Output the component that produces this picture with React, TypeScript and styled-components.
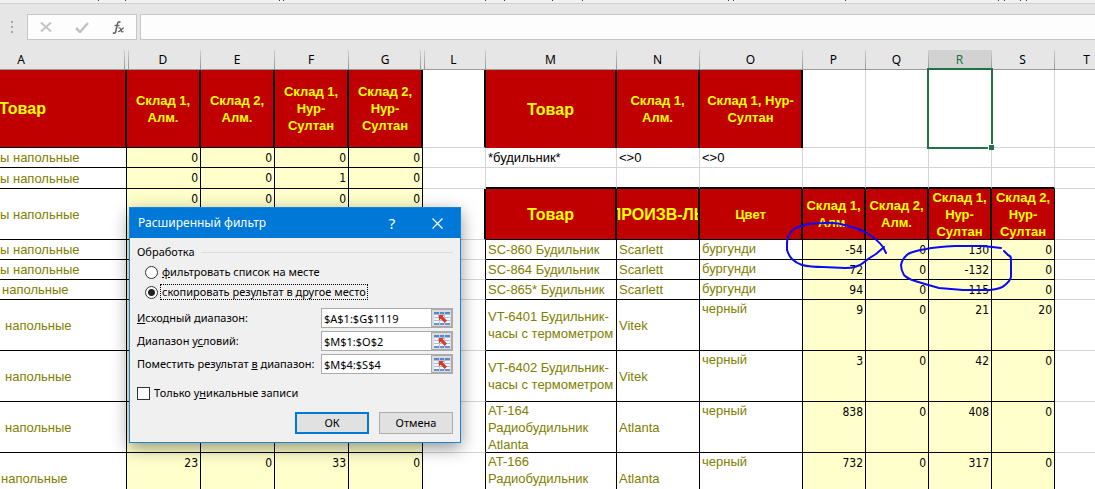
import React, { useState } from "react";
import styled, { createGlobalStyle, css } from "styled-components";

const UI_FONT = '"Noto Sans", "Open Sans", sans-serif';
const CELL_FONT = '"Liberation Sans", Arial, sans-serif';
const NUMBER_FONT = '"DejaVu Sans Condensed", "DejaVu Sans", sans-serif';

const GlobalStyle = createGlobalStyle`
  *, *::before, *::after { box-sizing: border-box; }
  body { margin: 0; background: #fff; overflow: hidden; }
`;

const Shell = styled.main`
  position: relative;
  display: flex;
  flex-direction: column;
  height: 100vh;
  overflow: hidden;
  background: #fff;
  font-family: ${UI_FONT};
  font-size: 12px;
  color: #000;
`;

/* ---------- ribbon edge and formula bar ---------- */

const RibbonEdge = styled.div`
  flex: none;
  height: 4px;
  background: #f1f1f1;
  border-bottom: 1px solid #d0d0d0;
  svg { display: block; }
`;

const FormulaBar = styled.div`
  flex: none;
  display: flex;
  align-items: center;
  gap: 3px;
  padding: 10px 0;
  background: #e6e6e6;
`;

const Grip = styled.div`
  display: grid;
  gap: 3px;
  width: 24px;
  padding-left: 11px;
`;

const GripDot = styled.i`
  width: 2px;
  height: 2px;
  background: #a6a6a6;
`;

const FormulaActions = styled.div`
  display: flex;
  width: 110px;
  height: 26px;
  background: #fdfdfd;
  border: 1px solid #c6c6c6;
`;

const FormulaButton = styled.button`
  flex: 1;
  display: grid;
  place-items: center;
  padding: 0;
  border: 0;
  background: none;
`;

const FormulaInput = styled.input`
  flex: 1;
  min-width: 0;
  height: 26px;
  padding: 0 6px;
  border: 1px solid #c6c6c6;
  border-right: 0;
  background: #fdfdfd;
  font: 12px ${UI_FONT};
  outline: none;
`;

/* ---------- sheet ---------- */

const Table = styled.table`
  width: 100%;
  table-layout: fixed;
  border-collapse: separate;
  border-spacing: 0;
`;

const Col = styled.col<{ $w?: number }>`
  ${(p) => p.$w && `width: ${p.$w}px;`}
`;

const separator = "linear-gradient(#d0d0d0, #949494)";

const ColumnHead = styled.th<{ $edge?: "before" | "after"; $active?: boolean; $scrolled?: boolean }>`
  height: 20px;
  padding: 0 ${(p) => (p.$scrolled ? "85px" : "2px")} 0 0;
  border-bottom: 1px solid #9b9b9b;
  font: 12px/19px ${UI_FONT};
  text-align: center;
  color: ${(p) => (p.$active ? "#217346" : "#000")};
  background-color: ${(p) => (p.$active ? "#d2d2d2" : "#e6e6e6")};
  background-repeat: no-repeat;
  background-size: 1px 100%;
  background-image: ${(p) => (p.$edge === "after" ? `${separator}, ${separator}` : separator)};
  background-position: ${(p) =>
    p.$edge === "before" ? "right 2px top 0" : p.$edge === "after" ? "right 0 top 0, left 1px top 0" : "right 0 top 0"};
`;

type Line = "grid" | "thin" | "thick" | "none";
const lines: Record<Line, string> = {
  grid: "1px solid #d4d4d4",
  thin: "1px solid #000",
  thick: "2px solid #000",
  none: "0",
};

const Cell = styled.td<{ $right: Line; $bottom: Line; $fill?: string }>`
  position: relative;
  padding: 0;
  border-right: ${(p) => lines[p.$right]};
  border-bottom: ${(p) => lines[p.$bottom]};
  background: ${(p) => p.$fill || "#fff"};
`;

const CellBox = styled.div<{ $h: number }>`
  display: flex;
  align-items: center;
  height: ${(p) => p.$h}px;
  overflow: hidden;
`;

const HeadText = styled(CellBox)<{ $big?: boolean; $scrolled?: boolean }>`
  justify-content: center;
  ${(p) => p.$scrolled && css`padding-right: 80px;`}
  font: bold ${(p) => (p.$big ? 16 : 13)}px/17px ${CELL_FONT};
  white-space: pre;
  text-align: center;
  color: #ff0;
`;

const BodyText = styled(CellBox)<{ $top?: boolean; $indent?: number }>`
  align-items: ${(p) => (p.$top ? "flex-start" : "center")};
  padding-left: ${(p) => p.$indent ?? 2}px;
  font: 13px/17px ${CELL_FONT};
  white-space: pre;
  color: #808000;
`;

const NumberText = styled(CellBox)`
  align-items: flex-start;
  justify-content: flex-end;
  padding-right: 2px;
  font: 12px/21px ${NUMBER_FONT};
`;

const CriteriaText = styled(CellBox)`
  padding-left: 2px;
  font: 13px/19px ${CELL_FONT};
`;

const Selection = styled.span`
  position: absolute;
  z-index: 1;
  inset: -2px;
  border: 2px solid #217346;
`;

const FillHandle = styled.span`
  position: absolute;
  z-index: 1;
  right: -3px;
  bottom: -3px;
  width: 6px;
  height: 6px;
  background: #217346;
  border-left: 1px solid #fff;
  border-top: 1px solid #fff;
`;

const Ink = styled.svg`
  position: absolute;
  left: 780px;
  top: 210px;
  width: 240px;
  height: 90px;
  fill: none;
  stroke: #0a0af5;
  stroke-width: 2;
  stroke-linecap: round;
  stroke-linejoin: round;
  pointer-events: none;
`;

const RED = "#c00000";
const YELLOW = "#ffffcc";

interface SheetRow {
  h: number;
  item: string;
  indent: number;
  stock: string[];
  name?: string;
  maker?: string;
  color?: string;
  result?: string[];
}

const rows: SheetRow[] = [
  { h: 20, item: "ы напольные", indent: 0, stock: ["0", "0", "0", "0"], name: "*будильник*", maker: "<>0", color: "<>0" },
  { h: 21, item: "ы напольные", indent: 0, stock: ["0", "0", "1", "0"] },
  {
    h: 51, item: "ы напольные", indent: 0, stock: ["0", "0", "0", "0"],
    name: "Товар", maker: "ПРОИЗВ-ЛЬ", color: "Цвет",
    result: ["Склад 1,\nАлм.", "Склад 2,\nАлм.", "Склад 1,\nНур-\nСултан", "Склад 2,\nНур-\nСултан"],
  },
  { h: 20, item: "ы напольные", indent: 0, stock: ["0", "0", "0", "0"], name: "SC-860 Будильник", maker: "Scarlett", color: "бургунди", result: ["-54", "0", "130", "0"] },
  { h: 20, item: "ы напольные", indent: 0, stock: ["0", "0", "0", "0"], name: "SC-864 Будильник", maker: "Scarlett", color: "бургунди", result: ["72", "0", "-132", "0"] },
  { h: 20, item: "напольные", indent: 2, stock: ["0", "0", "0", "0"], name: "SC-865* Будильник", maker: "Scarlett", color: "бургунди", result: ["94", "0", "115", "0"] },
  { h: 51, item: "напольные", indent: 5, stock: ["0", "0", "0", "0"], name: "VT-6401 Будильник-\nчасы с термометром", maker: "Vitek", color: "черный", result: ["9", "0", "21", "20"] },
  { h: 51, item: "напольные", indent: 5, stock: ["0", "0", "0", "0"], name: "VT-6402 Будильник-\nчасы с термометром", maker: "Vitek", color: "черный", result: ["3", "0", "42", "0"] },
  { h: 51, item: "напольные", indent: 5, stock: ["0", "0", "0", "0"], name: "AT-164\nРадиобудильник\nAtlanta", maker: "Atlanta", color: "черный", result: ["838", "0", "408", "0"] },
  { h: 51, item: "напольные", indent: 1, stock: ["23", "0", "33", "0"], name: "AT-166\nРадиобудильник\nAtlanta", maker: "Atlanta", color: "черный", result: ["732", "0", "317", "0"] },
];

const stockHeads = ["Склад 1,\nАлм.", "Склад 2,\nАлм.", "Склад 1,\nНур-\nСултан", "Склад 2,\nНур-\nСултан"];
const criteriaHeads = ["Товар", "Склад 1,\nАлм.", "Склад 1, Нур-\nСултан"];

function HeadRow() {
  const h = 77;
  return (
    <tr>
      <Cell $right="thick" $bottom="thin" $fill={RED}>
        <HeadText $h={h} $big $scrolled>Товар</HeadText>
      </Cell>
      {stockHeads.map((t, i) => (
        <Cell key={i} $right="thick" $bottom="thin" $fill={RED}>
          <HeadText $h={h}>{t}</HeadText>
        </Cell>
      ))}
      <Cell $right="thick" $bottom="grid" />
      {criteriaHeads.map((t, i) => (
        <Cell key={i} $right="thick" $bottom="none" $fill={RED}>
          <HeadText $h={h} $big={i === 0}>{t}</HeadText>
        </Cell>
      ))}
      <Cell $right="grid" $bottom="grid" />
      <Cell $right="grid" $bottom="grid" />
      <Cell $right="grid" $bottom="grid">
        <Selection />
        <FillHandle />
      </Cell>
      <Cell $right="grid" $bottom="grid" />
      <Cell $right="none" $bottom="grid" />
    </tr>
  );
}

function DataRow({ row, index }: { row: SheetRow; index: number }) {
  const h = row.h - 1;
  const isHead = index === 2;
  const isResult = index > 2;
  const left = [row.name, row.maker, row.color];
  const bottom: Line = index === 0 ? "grid" : index === 1 ? "thick" : "thin";
  const right: Line = isHead ? "thick" : isResult ? "thin" : "grid";
  return (
    <tr>
      <Cell $right="thin" $bottom="thin">
        <BodyText $h={h} $indent={row.indent}>{row.item}</BodyText>
      </Cell>
      {row.stock.map((v, i) => (
        <Cell key={i} $right="thin" $bottom="thin" $fill={YELLOW}>
          <NumberText $h={h}>{v}</NumberText>
        </Cell>
      ))}
      <Cell $right={right} $bottom="grid" />
      {left.map((v, i) => (
        <Cell key={i} $right={right} $bottom={bottom} $fill={isHead ? RED : undefined}>
          {isHead ? (
            <HeadText $h={h} $big={i < 2}>{v}</HeadText>
          ) : isResult ? (
            <BodyText $h={h} $top={i === 2}>{v}</BodyText>
          ) : v ? (
            <CriteriaText $h={h}>{v}</CriteriaText>
          ) : null}
        </Cell>
      ))}
      {[0, 1, 2, 3].map((i) => (
        <Cell
          key={i}
          $right={isHead && i === 3 ? "thin" : right}
          $bottom={bottom}
          $fill={isHead ? RED : isResult ? YELLOW : undefined}
        >
          {isHead ? (
            <HeadText $h={h}>{row.result![i]}</HeadText>
          ) : isResult ? (
            <NumberText $h={h}>{row.result![i]}</NumberText>
          ) : null}
        </Cell>
      ))}
      <Cell $right="none" $bottom="grid" />
    </tr>
  );
}

/* ---------- dialog ---------- */

const Dialog = styled.form`
  position: absolute;
  z-index: 2;
  left: 129px;
  top: 207px;
  width: 332px;
  background: #f0f0f0;
  border: 1px solid #1883d7;
  box-shadow: 0 5px 16px rgba(0, 0, 0, 0.42);
  font: 11px/16px ${UI_FONT};
`;

const TitleBar = styled.header`
  display: flex;
  align-items: center;
  height: 30px;
  padding: 0 15px 0 8px;
  background: #0078d7;
  color: #fff;
`;

const Title = styled.h1`
  flex: 1;
  margin: 0;
  font: 12px/16px ${UI_FONT};
`;

const TitleButton = styled.button`
  display: grid;
  place-items: center;
  width: 16px;
  height: 20px;
  margin-left: 29px;
  padding: 0;
  border: 0;
  background: none;
  color: #fff;
  font: 15px/20px ${UI_FONT};
`;

const DialogBody = styled.div`
  padding: 6px 7px 8px;
`;

const Group = styled.fieldset`
  min-width: 0;
  margin: 0;
  padding: 0;
  border: 0;
`;

const Legend = styled.legend`
  display: flex;
  align-items: center;
  gap: 6px;
  width: 100%;
  margin-bottom: 2px;
  padding: 0;
  &::after {
    content: "";
    flex: 1;
    height: 1px;
    background: #dcdcdc;
  }
`;

const Option = styled.label`
  display: flex;
  align-items: center;
  gap: 2px;
  height: 20px;
  padding-left: 8px;
`;

const Radio = styled.input`
  appearance: none;
  width: 13px;
  height: 13px;
  margin: 0;
  border: 1px solid #333;
  border-radius: 50%;
  background: #fff;
  &:checked {
    background: radial-gradient(circle, #222 0 3px, #fff 4px);
  }
`;

const OptionText = styled.span<{ $focused?: boolean }>`
  padding: 0 1px;
  line-height: 14px;
  white-space: nowrap;
  border: 1px dotted ${(p) => (p.$focused ? "#000" : "transparent")};
`;

const Fields = styled.div`
  display: grid;
  gap: 3px;
  padding-top: 6px;
`;

const Field = styled.div`
  display: flex;
  align-items: center;
  justify-content: space-between;
  white-space: nowrap;
`;

const RangeBox = styled.div`
  flex: none;
  display: flex;
  width: 132px;
  height: 20px;
  border: 1px solid #ababab;
  background: #fff;
`;

const RangeInput = styled.input`
  flex: 1;
  min-width: 0;
  padding: 0 2px;
  border: 0;
  background: none;
  font: 11px ${UI_FONT};
  outline: none;
`;

const RangeButton = styled.button`
  flex: none;
  display: grid;
  place-items: center;
  width: 21px;
  padding: 0;
  border: 1px solid #ababab;
  background: #dcdcdc;
`;

const CheckRow = styled.label`
  display: flex;
  align-items: center;
  gap: 4px;
  padding-top: 11px;
`;

const Checkbox = styled.input`
  appearance: none;
  width: 13px;
  height: 13px;
  margin: 0;
  border: 1px solid #333;
  background: #fff;
`;

const Buttons = styled.div`
  display: flex;
  justify-content: flex-end;
  gap: 10px;
  padding: 11px 0 0;
`;

const PushButton = styled.button<{ $primary?: boolean }>`
  width: 74px;
  height: 22px;
  padding: 0;
  border: ${(p) => (p.$primary ? "2px solid #0078d7" : "1px solid #adadad")};
  background: #e1e1e1;
  font: 11px/16px ${UI_FONT};
`;

function RangeIcon() {
  return (
    <svg width="16" height="13" viewBox="0 0 16 13" aria-hidden="true">
      <rect width="16" height="13" fill="#f3f6fc" />
      <path d="M0 0h16v3H0z" fill="#5c86c8" />
      <path d="M0 2.500h16M0 5.500h16M0 8.500h16" stroke="#a9bfe4" fill="none" />
      <path d="M0 11h16v2H0z" fill="#6d90cb" />
      <path d="M5.500 0v13M10.500 0v13" stroke="#b7c9e8" />
      <path d="M4.500 3h5.500L8.700 4.500 13 8.500 10.800 11 6.700 6.800 5 8.500z" fill="#dd3a22" />
    </svg>
  );
}

interface RangeFieldProps {
  id: string;
  label: React.ReactNode;
  value: string;
}

function RangeField({ id, label, value }: RangeFieldProps) {
  return (
    <Field>
      <label htmlFor={id}>{label}</label>
      <RangeBox>
        <RangeInput id={id} defaultValue={value} />
        <RangeButton type="button" aria-label="Выбрать диапазон">
          <RangeIcon />
        </RangeButton>
      </RangeBox>
    </Field>
  );
}

function FilterDialog() {
  const [mode, setMode] = useState("copy");
  return (
    <Dialog role="dialog" aria-labelledby="dialog-title" onSubmit={(e) => e.preventDefault()}>
      <TitleBar>
        <Title id="dialog-title">Расширенный фильтр</Title>
        <TitleButton type="button">?</TitleButton>
        <TitleButton type="button" aria-label="Закрыть">
          <svg width="11" height="11" viewBox="0 0 11 11" aria-hidden="true">
            <path d="M.5.5l10 10M10.500.5l-10 10" stroke="#fff" strokeWidth="1.200" />
          </svg>
        </TitleButton>
      </TitleBar>
      <DialogBody>
        <Group>
          <Legend>Обработка</Legend>
          <Option>
            <Radio type="radio" name="mode" checked={mode === "inplace"} onChange={() => setMode("inplace")} />
            <OptionText><u>ф</u>ильтровать список на месте</OptionText>
          </Option>
          <Option>
            <Radio type="radio" name="mode" checked={mode === "copy"} onChange={() => setMode("copy")} />
            <OptionText $focused>скопировать результат в <u>д</u>ругое место</OptionText>
          </Option>
        </Group>
        <Fields>
          <RangeField id="source" label={<><u>И</u>сходный диапазон:</>} value="$A$1:$G$1119" />
          <RangeField id="criteria" label={<>Диапазон у<u>с</u>ловий:</>} value="$M$1:$O$2" />
          <RangeField id="target" label={<>Поместить результат <u>в</u> диапазон:</>} value="$M$4:$S$4" />
        </Fields>
        <CheckRow>
          <Checkbox type="checkbox" />
          <span>Только у<u>н</u>икальные записи</span>
        </CheckRow>
        <Buttons>
          <PushButton type="submit" $primary>ОК</PushButton>
          <PushButton type="button">Отмена</PushButton>
        </Buttons>
      </DialogBody>
    </Dialog>
  );
}

const ribbonMarks = [98, 125, 279, 283, 485, 504, 552, 582, 728, 733, 845, 998, 1004, 1020, 1026];

const columns: { name: string; w?: number; edge?: "before" | "after" }[] = [
  { name: "A", w: 127, edge: "before" },
  { name: "D", w: 74, edge: "after" },
  { name: "E", w: 74 },
  { name: "F", w: 74 },
  { name: "G", w: 74, edge: "before" },
  { name: "L", w: 63, edge: "after" },
  { name: "M", w: 131 },
  { name: "N", w: 83 },
  { name: "O", w: 103 },
  { name: "P", w: 63 },
  { name: "Q", w: 63 },
  { name: "R", w: 63 },
  { name: "S", w: 63 },
  { name: "T" },
];

const LastHead = styled(ColumnHead)`
  text-align: right;
  padding-right: 5px;
  background-image: none;
`;

export default function App() {
  return (
    <Shell>
      <GlobalStyle />
      <RibbonEdge>
        <svg width="1095" height="2" shapeRendering="crispEdges" aria-hidden="true">
          {ribbonMarks.map((x) => (
            <rect key={x} x={x} width="1" height="1" fill="#444" />
          ))}
        </svg>
      </RibbonEdge>
      <FormulaBar>
        <Grip aria-hidden="true">
          <GripDot />
          <GripDot />
          <GripDot />
        </Grip>
        <FormulaActions>
          <FormulaButton aria-label="Отмена ввода">
            <svg width="12" height="10" viewBox="0 0 12 10" aria-hidden="true">
              <path d="M1 .5l10 9M11 .5l-10 9" stroke="#c3c3c3" strokeWidth="2" />
            </svg>
          </FormulaButton>
          <FormulaButton aria-label="Ввод">
            <svg width="14" height="11" viewBox="0 0 14 11" aria-hidden="true">
              <path d="M1 6l4 4 8-9" stroke="#c3c3c3" strokeWidth="2.500" fill="none" />
            </svg>
          </FormulaButton>
          <FormulaButton aria-label="Вставить функцию">
            <svg width="13" height="13" viewBox="0 0 13 13" fill="none" stroke="#666" aria-hidden="true">
              <path d="M8.500 1.300C7 .3 5.800 1 5.300 3.300L3.900 10c-.4 2-1.500 2.700-3 1.800" strokeWidth="1.600" />
              <path d="M2.500 4.500h5" strokeWidth="1.300" />
              <path d="M6.500 7c1.400-.5 2 .3 2.500 2s1 2.200 2.500 1.500M12 6.800c-1.500-.2-4.300 4.200-6 3.900" strokeWidth="1.300" />
            </svg>
          </FormulaButton>
        </FormulaActions>
        <FormulaInput aria-label="Строка формул" />
      </FormulaBar>
      <Table>
        <colgroup>
          {columns.map((c) => (
            <Col key={c.name} $w={c.w} />
          ))}
        </colgroup>
        <thead>
          <tr>
            {columns.map((c) =>
              c.name === "T" ? (
                <LastHead key={c.name}>{c.name}</LastHead>
              ) : (
                <ColumnHead key={c.name} $edge={c.edge} $active={c.name === "R"} $scrolled={c.name === "A"}>
                  {c.name}
                </ColumnHead>
              )
            )}
          </tr>
        </thead>
        <tbody>
          <HeadRow />
          {rows.map((row, i) => (
            <DataRow key={i} row={row} index={i} />
          ))}
        </tbody>
      </Table>
      <Ink viewBox="780 210 240 90" aria-hidden="true">
        <path d="M886 253L883 247Q877 239 865 232Q857 228 848 226Q836 222 824 223Q809 223 801 226Q794 228 791 232Q787 237 787 243V250Q789 256 792 259Q796 263 802 265Q810 267 823 267L845 268Q857 268 863 263Q869 258 876 254L884 247" />
        <path d="M1001 248L983 246H955Q936 247 926 249Q914 251 908 254Q902 259 901 265Q901 270 904 275Q908 279 915 281Q928 285 939 288L963 290H990Q1001 289 1005 285Q1010 281 1011 277V259Q1011 256 1008 255L1004 251" />
      </Ink>
      <FilterDialog />
    </Shell>
  );
}
